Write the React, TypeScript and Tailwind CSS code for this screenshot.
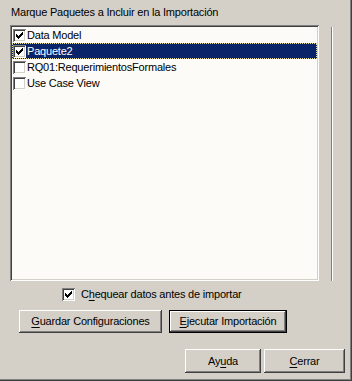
import React from 'react';

interface Paquete {
  name: string;
  checked: boolean;
}

const paquetes: Paquete[] = [
  { name: 'Data Model', checked: true },
  { name: 'Paquete2', checked: true },
  { name: 'RQ01:RequerimientosFormales', checked: false },
  { name: 'Use Case View', checked: false },
];

const raised =
  'shadow-[inset_-1px_-1px_#404040,inset_1px_1px_#ffffff,inset_-2px_-2px_#808080,inset_2px_2px_#d4d0c8]';
const sunken =
  'shadow-[inset_1px_1px_#808080,inset_-1px_-1px_#ffffff,inset_2px_2px_#404040,inset_-2px_-2px_#d4d0c8]';

function CheckBox({ checked }: { checked: boolean }) {
  return (
    <div className={`relative w-[13px] h-[13px] shrink-0 bg-white ${sunken}`}>
      {checked && (
        <svg className="absolute left-[3px] top-[3px]" width="7" height="7" viewBox="0 0 7 7" shapeRendering="crispEdges">
          <path
            d="M6 0h1v1h-1z M5 1h2v1h-2z M0 2h1v1h-1z M4 2h3v1h-3z M0 3h2v1h-2z M3 3h3v1h-3z M0 4h5v1h-5z M1 5h3v1h-3z M2 6h1v1h-1z"
            fill="#000"
          />
        </svg>
      )}
    </div>
  );
}

function Button({ label, mnemonic, className, isDefault }: { label: string; mnemonic: number; className: string; isDefault?: boolean }) {
  const before = label.slice(0, mnemonic);
  const key = label.charAt(mnemonic);
  const after = label.slice(mnemonic + 1);
  return (
    <div className={`flex items-center justify-center bg-[#d4d0c8] ${isDefault ? 'border border-black' : ''} ${className}`}>
      <div className={`w-full h-full flex items-center justify-center ${raised}`}>
        <span className="leading-[13px]">
          {before}
          <span className="underline underline-offset-2">{key}</span>
          {after}
        </span>
      </div>
    </div>
  );
}

export default function App() {
  return (
    <div className="w-[352px] h-[381px] bg-[#d4d0c8] text-black text-[11px] tracking-[-0.2px] font-['Liberation_Sans',Arial,sans-serif] shadow-[inset_-1px_-1px_#404040,inset_-2px_-2px_#808080] flex flex-col">
      {/* Title */}
      <div className="pt-[6px] pl-[11px] leading-[13px]">Marque Paquetes a Incluir en la Importación</div>

      {/* List + separator */}
      <div className="flex mt-[6px] pl-[10px]">
        <div className={`w-[309px] h-[256px] bg-[#fcfbf8] p-[2px] ${sunken}`}>
          {paquetes.map((p, i) => {
            const selected = i === 1;
            return (
              <div
                key={p.name}
                className={`h-[16px] flex items-center pl-[1px] ${
                  selected ? 'bg-[#0a246a] text-white outline outline-1 outline-dotted outline-[#e8df9a] -outline-offset-1' : ''
                }`}
              >
                <CheckBox checked={p.checked} />
                <span className="ml-[1px] leading-[13px]">{p.name}</span>
              </div>
            );
          })}
        </div>
        <div className="ml-[12px] mt-[2px] h-[254px] w-[2px] border-l border-r border-l-[#808080] border-r-white" />
      </div>

      {/* Option checkbox */}
      <div className="flex items-center mt-[7px] pl-[62px]">
        <CheckBox checked={true} />
        <span className="ml-[6px] leading-[13px]">
          C<span className="underline underline-offset-2">h</span>equear datos antes de importar
        </span>
      </div>

      {/* Action buttons */}
      <div className="flex mt-[9px] pl-[19px] gap-[7px]">
        <Button label="Guardar Configuraciones" mnemonic={0} className="w-[143px] h-[23px]" />
        <Button label="Ejecutar Importación" mnemonic={0} className="w-[118px] h-[23px]" isDefault />
      </div>

      {/* Dialog buttons */}
      <div className="flex justify-end mt-[16px] pr-[7px] gap-[3px]">
        <Button label="Ayuda" mnemonic={2} className="w-[76px] h-[24px]" />
        <Button label="Cerrar" mnemonic={0} className="w-[81px] h-[24px]" />
      </div>
    </div>
  );
}
